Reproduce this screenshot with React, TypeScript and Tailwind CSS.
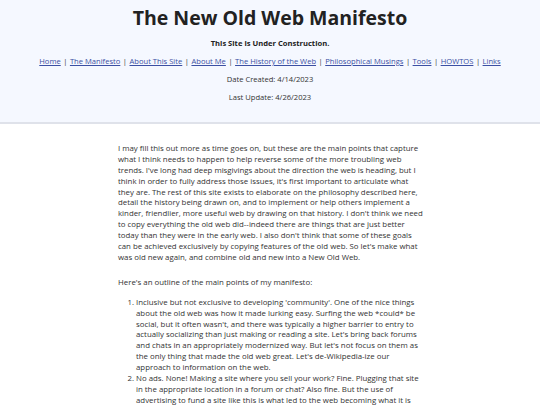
const links = [
  "Home",
  "The Manifesto",
  "About This Site",
  "About Me",
  "The History of the Web",
  "Philosophical Musings",
  "Tools",
  "HOWTOS",
  "Links",
];

// line breaks follow the reference page's wrapping
const intro = [
  "I may fill this out more as time goes on, but these are the main points that capture",
  "what I think needs to happen to help reverse some of the more troubling web",
  "trends. I've long had deep misgivings about the direction the web is heading, but I",
  "think in order to fully address those issues, it's first important to articulate what",
  "they are. The rest of this site exists to elaborate on the philosophy described here,",
  "detail the history being drawn on, and to implement or help others implement a",
  "kinder, friendlier, more useful web by drawing on that history. I don't think we need",
  "to copy everything the old web did--indeed there are things that are just better",
  "today than they were in the early web. I also don't think that some of these goals",
  "can be achieved exclusively by copying features of the old web. So let's make what",
  "was old new again, and combine old and new into a New Old Web.",
];

const points = [
  [
    "Inclusive but not exclusive to developing 'community'. One of the nice things",
    "about the old web was how it made lurking easy. Surfing the web *could* be",
    "social, but it often wasn't, and there was typically a higher barrier to entry to",
    "actually socializing than just making or reading a site. Let's bring back forums",
    "and chats in an appropriately modernized way. But let's not focus on them as",
    "the only thing that made the old web great. Let's de-Wikipedia-ize our",
    "approach to information on the web.",
  ],
  [
    "No ads. None! Making a site where you sell your work? Fine. Plugging that site",
    "in the appropriate location in a forum or chat? Also fine. But the use of",
    "advertising to fund a site like this is what led to the web becoming what it is",
    "today.",
  ],
];

function Lines({ lines }: { lines: string[] }) {
  return (
    <>
      {lines.map((l, i) => (
        <span key={i}>
          {l}
          {i < lines.length - 1 && <br />}
        </span>
      ))}
    </>
  );
}

export default function App() {
  return (
    <div className="min-h-screen bg-white font-['Open_Sans',sans-serif] text-[#333]">
      <header className="border-b-2 border-[#dfe2ea] bg-[#f5f8ff] pt-[7px] pb-[19.5px] text-center text-[7.6px] leading-[10.6px]">
        <h1 className="text-[19.5px] leading-[22px] font-bold text-[#222]">The New Old Web Manifesto</h1>
        <p className="mt-[9px] font-bold text-[#222]">This Site is Under Construction.</p>
        <nav className="mt-[7.5px]">
          {links.map((l, i) => (
            <span key={l}>
              {i > 0 && <span className="mx-[2.5px]">|</span>}
              <a href="#" className="text-[#3b4fa3] underline">
                {l}
              </a>
            </span>
          ))}
        </nav>
        <p className="mt-[7.5px]">Date Created: 4/14/2023</p>
        <p className="mt-[7.5px]">Last Update: 4/26/2023</p>
      </header>

      <main className="mx-auto w-[304px] pt-[18.5px] text-[7.85px] leading-[10.9px] whitespace-nowrap">
        <p>
          <Lines lines={intro} />
        </p>
        <p className="mt-[14px]">Here's an outline of the main points of my manifesto:</p>
        <ol className="mt-[9px] list-decimal pl-[18px]">
          {points.map((p, i) => (
            <li key={i}>
              <Lines lines={p} />
            </li>
          ))}
        </ol>
      </main>
    </div>
  );
}
